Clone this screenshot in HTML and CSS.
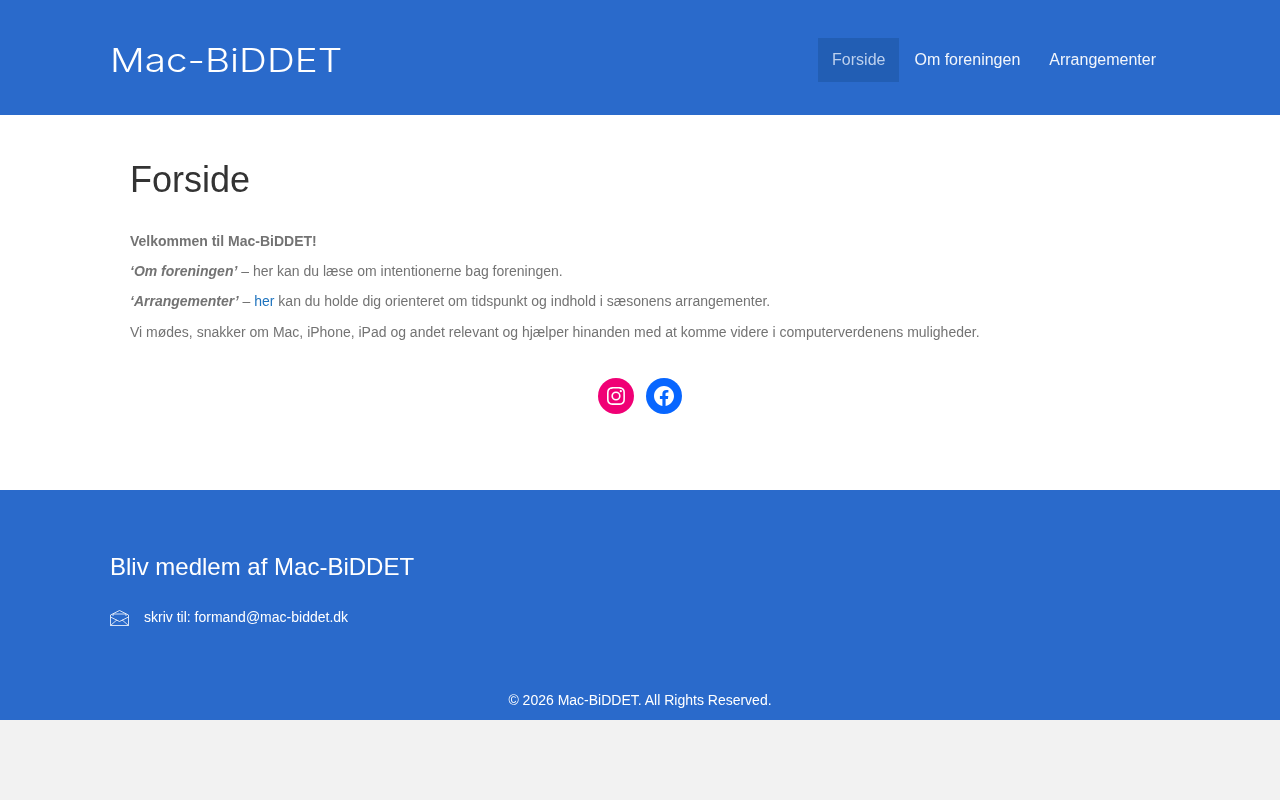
FILE: index.html
```html
<!DOCTYPE html>
<html lang="da">
<head>
    <meta charset="UTF-8">
    <meta name="viewport" content="width=device-width, initial-scale=1.0">
    <title>Mac-BiDDET</title>
    <link rel="stylesheet" href="styles.css">
</head>
<body>
    <div class="page">
    <header class="site-header">
        <a class="logo" href="#">Mac-BiDDET</a>
        <nav class="main-nav">
            <a class="nav-item active" href="#">Forside</a>
            <a class="nav-item" href="#">Om foreningen</a>
            <a class="nav-item" href="#">Arrangementer</a>
        </nav>
    </header>

    <main class="content">
        <h1>Forside</h1>
        <p><strong>Velkommen til Mac-BiDDET!</strong></p>
        <p><strong><em>‘Om foreningen’</em></strong> – her kan du læse om intentionerne bag foreningen.</p>
        <p class="arr"><strong><em>‘Arrangementer’</em></strong> – <a href="#">her</a> kan du holde dig orienteret om tidspunkt og indhold i sæsonens arrangementer.</p>
        <p>Vi mødes, snakker om Mac, iPhone, iPad og andet relevant og hjælper hinanden med at komme videre i computerverdenens muligheder.</p>
        <div class="social">
            <a class="social-link instagram" href="#" aria-label="Instagram">
                <svg viewBox="0 0 24 24" width="24" height="24" fill="#fff"><path d="M12 4.62c2.4 0 2.69.01 3.64.05.88.04 1.35.19 1.67.31.42.16.72.36 1.03.67.31.31.51.61.67 1.03.12.32.27.79.31 1.67.04.95.05 1.24.05 3.65s-.01 2.69-.05 3.64c-.04.88-.19 1.35-.31 1.67-.16.42-.36.72-.67 1.03-.31.31-.61.51-1.03.67-.32.12-.79.27-1.67.31-.95.04-1.24.05-3.64.05s-2.7-.01-3.65-.05c-.88-.04-1.35-.19-1.67-.31a2.8 2.8 0 0 1-1.03-.67 2.8 2.8 0 0 1-.67-1.03c-.12-.32-.27-.79-.31-1.67-.04-.95-.05-1.24-.05-3.64s.01-2.7.05-3.65c.04-.88.19-1.35.31-1.67.16-.42.36-.72.67-1.03.31-.31.61-.51 1.03-.67.32-.12.79-.27 1.67-.31.95-.04 1.24-.05 3.65-.05M12 3c-2.44 0-2.75.01-3.71.05-.96.05-1.61.2-2.18.42-.59.23-1.09.54-1.59 1.03-.5.5-.8 1-1.03 1.59-.22.57-.37 1.22-.42 2.18C3.01 9.25 3 9.56 3 12s.01 2.75.05 3.71c.05.96.2 1.61.42 2.18.23.59.53 1.09 1.03 1.59s1 .8 1.59 1.03c.57.22 1.22.37 2.18.42.96.04 1.27.05 3.71.05s2.75-.01 3.71-.05c.96-.05 1.61-.2 2.18-.42a4.4 4.4 0 0 0 1.59-1.03c.5-.5.8-1 1.03-1.59.22-.57.37-1.22.42-2.18.04-.96.05-1.27.05-3.71s-.01-2.75-.05-3.71c-.05-.96-.2-1.61-.42-2.18a4.4 4.4 0 0 0-1.03-1.59c-.5-.5-1-.8-1.59-1.03-.57-.22-1.22-.37-2.18-.42C14.75 3.01 14.44 3 12 3z"/><path d="M12 7.38a4.62 4.62 0 1 0 0 9.24 4.62 4.62 0 0 0 0-9.24zM12 15a3 3 0 1 1 0-6 3 3 0 0 1 0 6z"/><circle cx="16.8" cy="7.2" r="1.08"/></svg>
            </a>
            <a class="social-link facebook" href="#" aria-label="Facebook">
                <svg viewBox="0 0 24 24" width="24" height="24" fill="#fff"><path d="M12 2C6.5 2 2 6.5 2 12c0 5 3.7 9.1 8.4 9.9v-7H7.9V12h2.5V9.8c0-2.5 1.5-3.9 3.8-3.9 1.1 0 2.2.2 2.2.2v2.5h-1.3c-1.2 0-1.6.8-1.6 1.6V12h2.8l-.4 2.9h-2.3v7C18.3 21.1 22 17 22 12c0-5.500-4.500-10-10-10z"/></svg>
            </a>
        </div>
    </main>

    <footer class="site-footer">
        <h3>Bliv medlem af Mac-BiDDET</h3>
        <div class="contact">
            <svg class="mail-icon" viewBox="0 0 19 16" width="19" height="16" fill="none" stroke="#fff" stroke-width="0.8"><path d="M0.5 5 9.500 0.500 18.500 5V15.500H0.500Z"/><path d="M0.500 7 9.500 11.500 18.500 7"/><path d="M0.500 15.500 7 9.800M18.500 15.500 12 9.800"/><path d="M3 6V4H16V6"/></svg>
            <span>skriv til: formand@mac-biddet.dk</span>
        </div>
        <p class="copyright">© 2026 Mac-BiDDET. All Rights Reserved.</p>
    </footer>
    </div>
</body>
</html>
```

FILE: styles.css
```css
body {
    margin: 0;
    background-color: #f2f2f2;
    font-family: 'Liberation Sans', Arial, sans-serif;
    font-size: 14px;
    line-height: 20px;
    color: #737373;
}
a {
    text-decoration: none;
}
.page {
    will-change: transform;
}
.site-header {
    background-color: #2a6acb;
    height: 115px;
    box-sizing: border-box;
    padding: 4px 110px 0;
    display: flex;
    justify-content: space-between;
    align-items: center;
}
.logo {
    font-family: 'Inter', sans-serif;
    font-weight: 300;
    font-size: 33px;
    line-height: 44px;
    color: #fff;
    transform: scaleX(1.17);
    transform-origin: left center;
}
.main-nav {
    display: flex;
    gap: 1px;
}
.nav-item {
    padding: 0 14px;
    font-size: 16px;
    line-height: 44px;
    color: #f2f6fc;
}
.nav-item.active {
    background-color: #225eb4;
    color: #bcd0ee;
}
.content {
    background-color: #fff;
    height: 375px;
    box-sizing: border-box;
    padding: 40px 130px 0;
}
h1 {
    margin: 0 0 26px;
    font-size: 36px;
    font-weight: 400;
    line-height: 50px;
    color: #333;
}
.content p {
    margin: 0 0 10px;
}
.content p.arr {
    margin-bottom: 11px;
}
.content p a {
    color: #1e73be;
}
.social {
    display: flex;
    justify-content: center;
    gap: 12px;
    margin-top: 36px;
}
.social-link {
    width: 36px;
    height: 36px;
    border-radius: 50%;
    display: flex;
    align-items: center;
    justify-content: center;
}
.instagram {
    background-color: #f00075;
}
.facebook {
    background-color: #0866ff;
}
.site-footer {
    background-color: #2a6acb;
    height: 230px;
    box-sizing: border-box;
    padding: 60px 110px 0;
    color: #fff;
}
h3 {
    margin: 0 0 23px;
    font-size: 24px;
    font-weight: 400;
    line-height: 34px;
}
.contact {
    display: flex;
    align-items: center;
    gap: 15px;
}
.mail-icon {
    margin-top: 2px;
}
.copyright {
    margin: 63px 0 0;
    text-align: center;
}
```
